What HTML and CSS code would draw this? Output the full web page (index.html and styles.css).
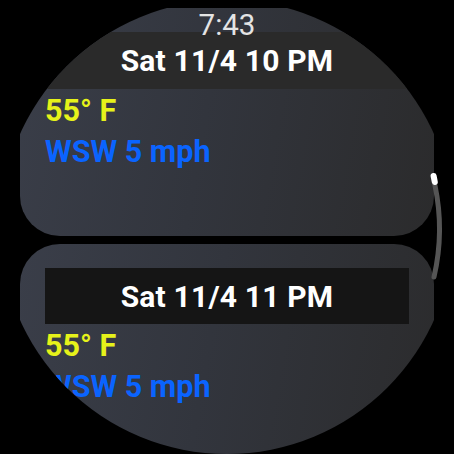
FILE: index.html
```html
<!DOCTYPE html>
<html>
<head>
<meta charset="utf-8">
<link rel="stylesheet" href="styles.css">
</head>
<body>
<div class="screen">
  <div class="list">
    <div class="card card-first">
      <div class="band band-faded">Sat 11/4 10 PM</div>
      <div class="temp">55° F</div>
      <div class="wind">WSW 5 mph</div>
    </div>
    <div class="card">
      <div class="band">Sat 11/4 11 PM</div>
      <div class="temp">55° F</div>
      <div class="wind">WSW 5 mph</div>
    </div>
  </div>
  <div class="time">7:43</div>
  <svg class="scroll" width="454" height="454" viewBox="0 0 454 454">
    <path d="M 434.9 185 A 213 213 0 0 1 434.0 277" fill="none" stroke="#555555" stroke-width="5" stroke-linecap="round"/>
    <path d="M 433.6 176 A 213 213 0 0 1 434.8 182" fill="none" stroke="#ffffff" stroke-width="6" stroke-linecap="round"/>
  </svg>
</div>
</body>
</html>
```
FILE: styles.css
```css
html, body {
  margin: 0;
  padding: 0;
  background: #000;
}
.screen {
  position: relative;
  width: 454px;
  height: 454px;
  border-radius: 50%;
  overflow: hidden;
  background: #000;
  font-family: Roboto, "Noto Sans", sans-serif;
}
.list {
  display: flex;
  flex-direction: column;
  gap: 8px;
  padding: 8px 20px 0 20px;
}
.card {
  border-radius: 40px;
  background: linear-gradient(100deg, #3a3e49 0%, #32353d 45%, #2b2b2c 100%);
  padding: 24px 25px 0 25px;
  height: 260px;
  box-sizing: border-box;
}
.card-first {
  height: 228px;
}
.band {
  height: 56px;
  background: #151515;
  color: #ffffff;
  font-weight: 700;
  font-size: 30px;
  display: flex;
  align-items: center;
  justify-content: center;
  letter-spacing: 0.2px;
}
.band-faded {
  height: 57px;
  background: #2a2a2a;
}
.temp {
  color: #e6f21a;
  font-weight: 700;
  font-size: 30.5px;
  line-height: 41px;
  margin-top: 1px;
}
.wind {
  color: #0a64ff;
  font-weight: 700;
  font-size: 30.5px;
  line-height: 41px;
}
.time {
  position: absolute;
  top: 6px;
  left: 0;
  right: 0;
  text-align: center;
  color: #e4e4e4;
  font-size: 29.5px;
  line-height: 38px;
}
.scroll {
  position: absolute;
  top: 0;
  left: 0;
}
```
